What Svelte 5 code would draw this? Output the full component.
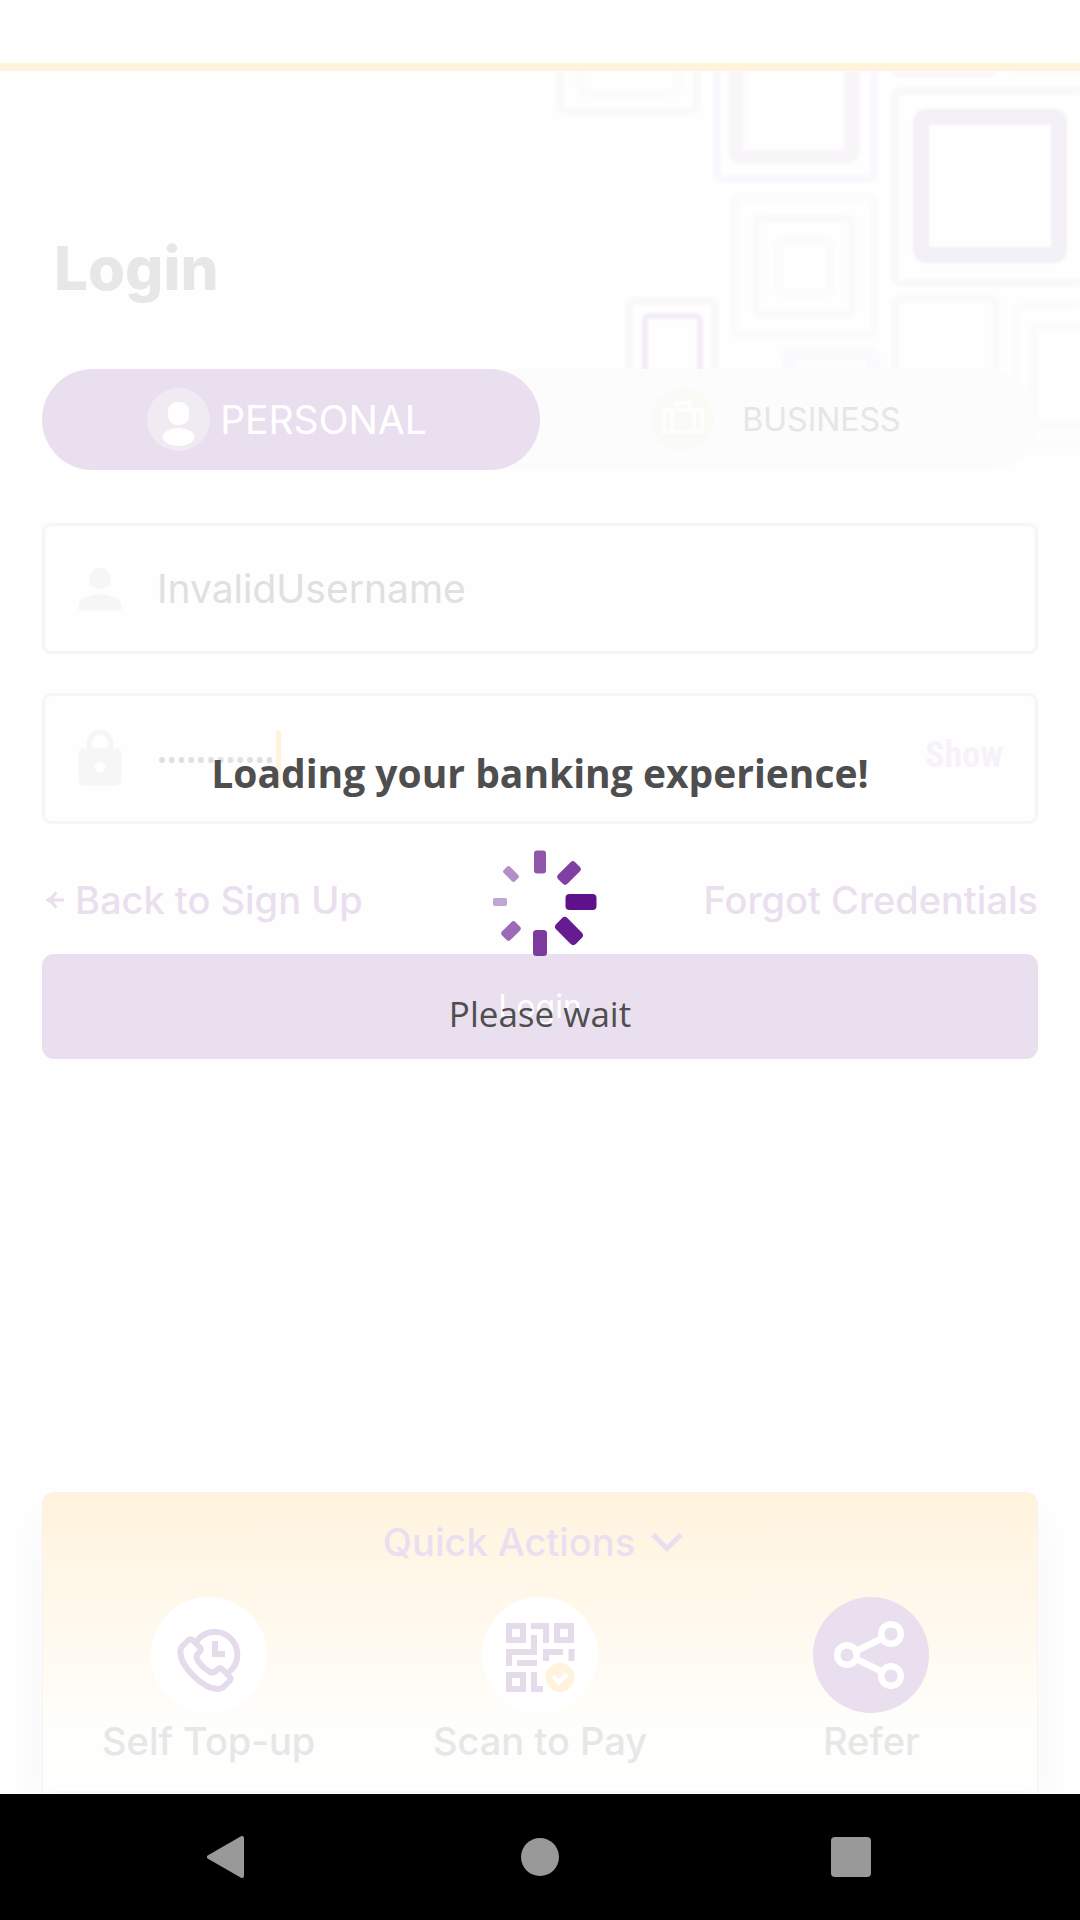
<script>
  let account = $state('personal');
  let username = $state('InvalidUsername');
  let password = $state('abcdefghijkl');

  // Background squares: x, y, width, height, stroke width, colour
  const squares = [
    [20, -60, 137, 100, 8, '#fbfafb'],
    [40, -60, 97, 82, 8, '#fcfbfc'],
    [177, -60, 157, 168, 8, '#faf8fc'],
    [196, -60, 116, 146, 15, '#f9f6fa'],
    [355, -60, 99, 63, 8, '#faf8fb'],
    [475, -60, 99, 60, 8, '#fcfbfc'],
    [355, 20, 220, 192, 8, '#faf8fb'],
    [381, 46, 138, 138, 16, '#f3f0f7'],
    [195, 126, 139, 138, 8, '#fbfafc'],
    [216, 147, 96, 97, 8, '#fbf9fc'],
    [239, 169, 51, 53, 8, '#fbfafc'],
    [89, 230, 86, 100, 8, '#faf8fb'],
    [105, 245, 55, 62, 6, '#f3edf6'],
    [249, 282, 84, 80, 14, '#fbfafd'],
    [355, 228, 101, 110, 8, '#fbf9fc'],
    [476, 235, 120, 138, 8, '#fcfcfd'],
    [493, 255, 120, 100, 8, '#fbfafc'],
  ];

  // Spinner petals: centre x, centre y, length, thickness, angle, colour
  const petals = [
    [50, 12, 23, 12, 90, '#8f56ac'],
    [79, 23, 24, 13, -45, '#8040a3'],
    [91, 52, 31, 16, 0, '#5e118b'],
    [79, 81, 28, 16, 45, '#661c91'],
    [50, 93, 26, 14, 90, '#7c3a9f'],
    [21, 81, 19, 12, -45, '#9c6ab6'],
    [10, 52, 14, 8, 0, '#c1a5d3'],
    [21, 24, 16, 9, 45, '#b38ec8'],
  ];
</script>

<div class="screen">
  <div class="status"></div>
  <main>
    <svg class="pattern" viewBox="0 0 540 400" aria-hidden="true">
      {#each squares as [x, y, w, h, s, c]}
        <rect {x} {y} width={w} height={h} rx="5" fill="none" stroke={c} stroke-width={s} />
      {/each}
    </svg>

    <h1>Login</h1>

    <div class="tabs">
      <button class="tab" class:active={account === 'personal'} onclick={() => (account = 'personal')}>
        <svg width="63" height="63" viewBox="0 0 63 63" aria-hidden="true">
          <circle cx="31.5" cy="31.5" r="31.5" fill="#f0ebf2" />
          <rect x="21" y="14" width="21" height="23" rx="9" fill="#fefefe" />
          <ellipse cx="31.5" cy="49" rx="16" ry="9" fill="#fefefe" />
        </svg>
        <span>PERSONAL</span>
      </button>
      <button class="tab business" onclick={() => (account = 'business')}>
        <svg width="63" height="63" viewBox="0 0 63 63" aria-hidden="true">
          <circle cx="31.5" cy="31.5" r="31.5" fill="#fafaf7" />
          <path d="M13 22H51V44H13ZM25 22V15H39V22M21 22V44M43 22V44" fill="none" stroke="#fefefe" stroke-width="4" stroke-linejoin="round" />
        </svg>
        <span>BUSINESS</span>
      </button>
    </div>

    <form onsubmit={(e) => e.preventDefault()}>
      <div class="field">
        <label for="user" aria-label="Username">
          <svg width="64" height="64" viewBox="0 0 24 24" fill="#f6f6f6"><path d="M12 12c2.2 0 4-1.8 4-4s-1.8-4-4-4-4 1.800-4 4 1.800 4 4 4zm0 2c-2.700 0-8 1.300-8 4v2h16v-2c0-2.700-5.300-4-8-4z" /></svg>
        </label>
        <input id="user" type="text" bind:value={username} />
      </div>
      <div class="field">
        <label for="pass" aria-label="Password">
          <svg width="64" height="64" viewBox="0 0 24 24" fill="#f6f6f6"><path d="M18 8h-1V6c0-2.760-2.240-5-5-5S7 3.240 7 6v2H6c-1.100 0-2 .9-2 2v10c0 1.100.9 2 2 2h12c1.100 0 2-.9 2-2V10c0-1.100-.9-2-2-2zm-6 9c-1.100 0-2-.9-2-2s.9-2 2-2 2 .9 2 2-.9 2-2 2zM15.100 8H8.900V6c0-1.710 1.390-3.100 3.100-3.100s3.100 1.390 3.100 3.100z" /></svg>
        </label>
        <div class="secret">
          <input id="pass" type="password" bind:value={password} />
          <i class="caret"></i>
        </div>
        <button type="button" class="show">Show</button>
      </div>

      <div class="links">
        <a href="#signup">
          <svg width="18" height="20" viewBox="0 0 18 20" aria-hidden="true"><path d="M18 10H3M10 2Q7 8 2 10Q7 12 10 18" fill="none" stroke="#eadfee" stroke-width="3" /></svg>
          <span>Back to Sign Up</span>
        </a>
        <a href="#forgot">Forgot Credentials</a>
      </div>

      <button class="submit">Login</button>
    </form>

    <section class="quick">
      <button class="toggle">
        <span>Quick Actions</span>
        <svg width="32" height="20" viewBox="0 0 32 20" aria-hidden="true"><path d="M2 2.500L16 16.500L30 2.500" fill="none" stroke="#eadff0" stroke-width="5" /></svg>
      </button>
      <div class="actions">
        <button>
          <svg width="116" height="116" viewBox="0 0 116 116" aria-hidden="true">
            <circle cx="58" cy="58" r="58" fill="#fff" />
            <g fill="none" stroke="#e4dcea" stroke-width="6">
              <path d="M45.500 44.500A22.500 22.500 0 1 1 78 75" />
              <path d="M37 43.500L31.500 49Q29.300 51.500 29.300 55.500C30 70 52 92 66.500 92Q70.500 92 73 89.500L78.500 84Q80.500 81.500 78.500 79.500L71 72Q69 70.200 67 72L65 74Q61.500 77 57.500 74C51.500 70.500 46 64 45.500 59.500Q45.500 58 46.500 57L49 54.500Q50.500 52 48.500 50L42 43.500Q39.500 41.300 37 43.500Z" />
              <path d="M64 44V57H74" />
            </g>
          </svg>
          <span>Self Top-up</span>
        </button>
        <button>
          <svg width="116" height="116" viewBox="0 0 116 116" aria-hidden="true">
            <circle cx="58" cy="58" r="58" fill="#fff" />
            <g fill="none" stroke="#e4dcea" stroke-width="6">
              <path d="M27 29H41V43H27ZM75 29H89V43H75ZM27 78H41V92H27Z" />
              <path d="M49 29H64V46M52 38V55H27V69M35 66H55M81 55H64V64M89.500 52V64M52 75V92H61" />
            </g>
            <circle cx="78" cy="80.500" r="14.500" fill="#fff3dd" />
            <path d="M71 79L77 85L85 77" fill="none" stroke="#fff" stroke-width="4.500" />
          </svg>
          <span>Scan to Pay</span>
        </button>
        <button>
          <svg width="116" height="116" viewBox="0 0 116 116" aria-hidden="true">
            <circle cx="58" cy="58" r="58" fill="#eadfee" />
            <g fill="none" stroke="#fff" stroke-width="6.500">
              <circle cx="34" cy="58" r="9.800" />
              <circle cx="78" cy="37" r="9.800" />
              <circle cx="78" cy="79" r="9.800" />
              <path d="M43 54L69 41.500M43 62L69 74.500" />
            </g>
          </svg>
          <span>Refer</span>
        </button>
      </div>
    </section>
  </main>

  <nav>
    <button aria-label="Back"><svg width="44" height="44" viewBox="0 0 44 44"><path d="M35 3V41L2 22Z" fill="#999" stroke="#999" stroke-width="4" stroke-linejoin="round" /></svg></button>
    <button aria-label="Home"><svg width="44" height="44" viewBox="0 0 44 44"><circle cx="22" cy="22" r="19" fill="#999" /></svg></button>
    <button aria-label="Recents"><svg width="44" height="44" viewBox="0 0 44 44"><rect x="2" y="2" width="40" height="40" rx="4" fill="#999" /></svg></button>
  </nav>

  <div class="overlay" role="status">
    <strong>Loading your banking experience!</strong>
    <svg width="116" height="106" viewBox="-8 0 116 106" aria-hidden="true">
      {#each petals as [cx, cy, l, t, a, c]}
        <rect x={cx - l / 2} y={cy - t / 2} width={l} height={t} rx={t / 4} fill={c} transform={`rotate(${a} ${cx} ${cy})`} />
      {/each}
    </svg>
    <span>Please wait</span>
  </div>
</div>

<style>
  :global(body) {
    margin: 0;
    background: #fefefe;
  }
  .screen {
    position: relative;
    display: flex;
    flex-direction: column;
    min-height: 100vh;
    font-family: Inter, 'Open Sans', sans-serif;
    color: #e7e7e7;
  }
  button {
    border: 0;
    padding: 0;
    margin: 0;
    background: none;
    font: inherit;
    color: inherit;
  }
  svg {
    display: block;
    flex: none;
  }
  .status {
    height: 63px;
    border-bottom: 8px solid #fff3dd;
  }
  main {
    position: relative;
    flex: 1;
    display: flex;
    flex-direction: column;
    padding: 167px 42px 3px;
    overflow: hidden;
  }
  .pattern {
    position: absolute;
    top: 0;
    right: 0;
    width: 540px;
    height: 400px;
    filter: blur(1px);
  }
  h1 {
    margin: 0 12px 71px;
    font-size: 60px;
    line-height: 60px;
    font-weight: 800;
  }
  .tabs {
    position: relative;
    display: grid;
    grid-template-columns: 1fr 1fr;
    height: 101px;
    margin-bottom: 53px;
    border-radius: 51px;
    background: #fcfcfc;
  }
  .tab {
    display: flex;
    align-items: center;
    justify-content: center;
    gap: 10px;
    padding-right: 8px;
    border-radius: 51px;
    font-size: 39px;
  }
  .tab.active {
    background: #eadfee;
    color: #fff;
  }
  .tab.business {
    gap: 28px;
    padding-right: 26px;
    font-size: 32px;
    color: #e4e6e8;
  }
  form {
    position: relative;
  }
  .field {
    box-sizing: border-box;
    display: flex;
    align-items: center;
    height: 131px;
    margin-bottom: 39px;
    padding: 0 32px 0 23px;
    border: 3px solid #f6f6f6;
    border-radius: 9px;
    background: #fefefe;
  }
  .field input {
    flex: 1;
    min-width: 0;
    width: 100%;
    height: 60px;
    padding: 0;
    border: 0;
    outline: 0;
    background: none;
    font: 39px Inter, 'Open Sans', sans-serif;
    color: #e0e0e0;
  }
  .field label {
    margin-right: 25px;
  }
  .field .secret input {
    font: 26px 'Open Sans', sans-serif;
  }
  .secret {
    position: relative;
    flex: 1;
    display: flex;
  }
  .caret {
    position: absolute;
    left: 119px;
    top: 2px;
    width: 5px;
    height: 57px;
    background: #fff3dd;
  }
  .show {
    margin-bottom: 8px;
    font: 700 36px 'Roboto Condensed', Roboto, sans-serif;
    color: #f7f2f9;
  }
  .links {
    display: flex;
    align-items: center;
    justify-content: space-between;
    height: 52px;
    margin: 50px 0 28px;
  }
  .links a {
    display: flex;
    align-items: center;
    gap: 11px;
    padding-left: 4px;
    font-size: 38px;
    line-height: 52px;
    font-weight: 500;
    color: #eadfee;
    text-decoration: none;
  }
  .submit {
    display: block;
    width: 100%;
    height: 105px;
    border-radius: 12px;
    background: #eadfee;
    font-size: 32px;
    color: #fff;
  }
  .quick {
    position: relative;
    display: flex;
    flex-direction: column;
    margin-top: auto;
    padding: 23px 0 24px;
    border: 1px solid #fcf1ec;
    border-bottom: 0;
    border-radius: 12px 12px 0 0;
    background: linear-gradient(#fff3dd, #fffaf0 50%, #fefefb 78%, #fefefe);
    box-shadow: 0 24px 40px #f8f7fa;
  }
  .toggle {
    align-self: center;
    display: flex;
    align-items: center;
    gap: 16px;
    margin: 0 14px 29px 0;
    font-size: 38px;
    line-height: 52px;
    font-weight: 500;
    color: #eadff0;
  }
  .actions {
    display: grid;
    grid-template-columns: repeat(3, 1fr);
  }
  .actions button {
    display: flex;
    flex-direction: column;
    align-items: center;
    gap: 2px;
    font-size: 38px;
    line-height: 52px;
    font-weight: 500;
  }
  nav {
    display: grid;
    grid-template-columns: repeat(3, 1fr);
    place-items: center;
    height: 126px;
    padding: 0 73px;
    background: #000;
  }
  .overlay {
    position: absolute;
    inset: 0 0 126px;
    display: flex;
    flex-direction: column;
    align-items: center;
    justify-content: center;
    padding-bottom: 10px;
    font-family: 'Open Sans', sans-serif;
    color: #4e4e4e;
  }
  .overlay strong {
    margin-bottom: 50px;
    font-size: 39px;
    line-height: 54px;
    font-weight: 700;
  }
  .overlay span {
    margin-top: 34px;
    font-size: 35px;
    line-height: 48px;
  }
</style>
